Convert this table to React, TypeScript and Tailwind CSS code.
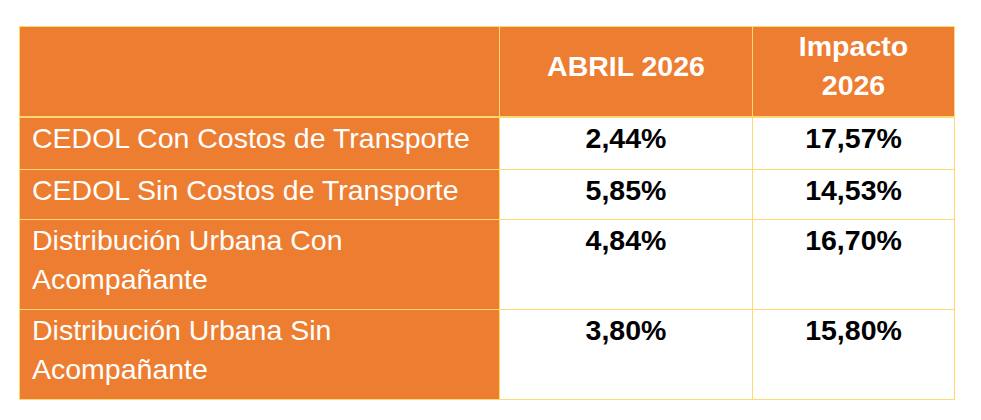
import { Fragment } from "react";

const ROWS = [
  { label: ["CEDOL Con Costos de Transporte"], abril: "2,44%", impacto: "17,57%" },
  { label: ["CEDOL Sin Costos de Transporte"], abril: "5,85%", impacto: "14,53%" },
  { label: ["Distribución Urbana Con", "Acompañante"], abril: "4,84%", impacto: "16,70%" },
  { label: ["Distribución Urbana Sin", "Acompañante"], abril: "3,80%", impacto: "15,80%" },
];

export default function App() {
  return (
    <div
      className="min-h-[420px] bg-white pl-[19px] pt-[26px]"
      style={{ fontFamily: '"Liberation Sans", Arial, Helvetica, sans-serif' }}
    >
      <div className="grid w-[936px] grid-cols-[479px_252px_201px] grid-rows-[90px_51px_49px_89px_89px] gap-px bg-[#FFD970] p-px text-[28.5px] leading-[39px]">
        {/* header */}
        <div className="mb-px bg-[#ED7D31]" />
        <div className="mb-px flex items-center justify-center bg-[#ED7D31] pb-[11px] text-center font-bold text-white">
          ABRIL 2026
        </div>
        <div className="mb-px flex items-center justify-center bg-[#ED7D31] pb-[11px] text-center font-bold text-white">
          Impacto
          <br />
          2026
        </div>

        {ROWS.map((row) => (
          <Fragment key={row.abril}>
            <div className="bg-[#ED7D31] pl-[12px] pt-px text-white">
              {row.label.map((line) => (
                <div key={line}>{line}</div>
              ))}
            </div>
            <div className="bg-white pt-px text-center font-bold text-black">{row.abril}</div>
            <div className="bg-white pt-px text-center font-bold text-black">{row.impacto}</div>
          </Fragment>
        ))}
      </div>
    </div>
  );
}
